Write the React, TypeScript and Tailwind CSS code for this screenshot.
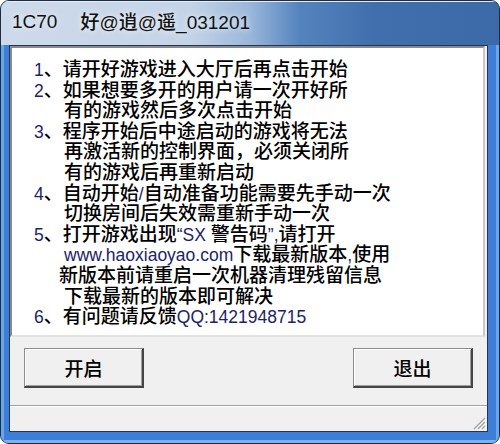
import React from "react";

const cjk = "font-['Noto_Sans_CJK_SC',sans-serif] font-medium";
const latin = "font-['Liberation_Sans','Noto_Sans_CJK_SC',sans-serif] font-normal text-[17.5px] text-[#1c2468]";

type Line = { num?: string; indent: string; body: React.ReactNode };

const lines: Line[] = [
  { num: "1", indent: "pl-[22px]", body: "请开好游戏进入大厅后再点击开始" },
  { num: "2", indent: "pl-[22px]", body: "如果想要多开的用户请一次开好所" },
  { indent: "pl-[52px]", body: "有的游戏然后多次点击开始" },
  { num: "3", indent: "pl-[22px]", body: "程序开始后中途启动的游戏将无法" },
  { indent: "pl-[52px]", body: "再激活新的控制界面，必须关闭所" },
  { indent: "pl-[52px]", body: "有的游戏后再重新启动" },
  {
    num: "4",
    indent: "pl-[22px]",
    body: (
      <>
        自动开始<span className={latin}>/</span>自动准备功能需要先手动一次
      </>
    ),
  },
  { indent: "pl-[52px]", body: "切换房间后失效需重新手动一次" },
  {
    num: "5",
    indent: "pl-[22px]",
    body: (
      <>
        打开游戏出现<span className={latin}>“SX </span>警告码<span className={latin}>”,</span>请打开
      </>
    ),
  },
  {
    indent: "pl-[52px]",
    body: (
      <>
        <span className={latin}>www.haoxiaoyao.com</span>下载最新版本<span className={latin}>,</span>使用
      </>
    ),
  },
  { indent: "pl-[47px]", body: "新版本前请重启一次机器清理残留信息" },
  { indent: "pl-[52px]", body: "下载最新的版本即可解决" },
  {
    num: "6",
    indent: "pl-[22px]",
    body: (
      <>
        有问题请反馈<span className={latin}>QQ:1421948715</span>
      </>
    ),
  },
];

const WinButton = ({ label }: { label: string }) => (
  <button
    className={`w-[120px] h-[40px] bg-[#f0f0f0] border-t border-l border-[#8c8c8c] border-r-2 border-b-2 border-r-[#454545] border-b-[#454545] shadow-[inset_1px_1px_0_#ffffff,inset_-1px_-1px_0_#a0a0a0] text-[19px] text-black leading-none ${cjk}`}
  >
    {label}
  </button>
);

export default function App() {
  return (
    <div className="w-[500px] h-[444px] bg-white">
      <div className="w-[500px] h-[444px] rounded-[9px] border border-[#1c2c44] overflow-hidden flex flex-col bg-[#3a78cf]">
        {/* title bar */}
        <div className="h-[44px] shrink-0 flex items-center pl-[11px] pb-[1px] bg-[linear-gradient(90deg,#cddaea_0%,#c4d4e7_38%,#9ab7da_50%,#5483bd_60%,#416fad_75%,#3c6aa8_100%)] shadow-[inset_0_1px_0_#e6eef8]">
          <span className="text-[19px] text-[#111] font-['Liberation_Sans','Noto_Sans_CJK_SC',sans-serif] [text-shadow:0_0_6px_#ffffff]">
            1C70
          </span>
          <span className="ml-[23px] text-[19px] text-[#111] font-['Liberation_Sans','Noto_Sans_CJK_SC',sans-serif] [text-shadow:0_0_6px_#ffffff]">
            <span className={cjk}>好</span>@<span className={cjk}>逍</span>@<span className={cjk}>遥</span>_031201
          </span>
        </div>

        {/* frame + client */}
        <div className="flex-1 flex pl-[8px] pr-[11px] pb-[11px] bg-[#3d7fd8] shadow-[inset_3px_0_0_#6aa6ea,inset_-3px_0_0_#6aa6ea,inset_0_-3px_0_#78b4f0]">
          <div className="flex-1 flex flex-col bg-[#f0f0f0] border border-[#24354f]">
            {/* text box */}
            <div className="h-[291px] mr-[2px] bg-white border-2 border-t-[#8a8a8a] border-l-[#8a8a8a] border-r-[#c8c8c8] border-b-[#e2e2e2] pt-[10px]">
              {lines.map((l, i) => (
                <div
                  key={i}
                  className={`${l.indent} h-[20.6px] leading-[20.6px] text-[19px] text-black whitespace-nowrap ${cjk}`}
                >
                  {l.num && (
                    <>
                      <span className={latin}>{l.num}</span>、
                    </>
                  )}
                  {l.body}
                </div>
              ))}
            </div>

            {/* buttons */}
            <div className="h-[68px] flex justify-between items-start pt-[11px] pl-[14px] pr-[14px]">
              <WinButton label="开启" />
              <WinButton label="退出" />
            </div>

            {/* status bar */}
            <div className="flex-1 relative border-t border-[#a0a0a0] shadow-[inset_0_1px_0_#ffffff]">
              <svg
                className="absolute right-[1px] bottom-[1px]"
                width="14"
                height="14"
                viewBox="0 0 14 14"
              >
                <g stroke="#a0a0a0" strokeWidth="1.2">
                  <line x1="13" y1="2" x2="2" y2="13" />
                  <line x1="13" y1="6" x2="6" y2="13" />
                  <line x1="13" y1="10" x2="10" y2="13" />
                </g>
                <g stroke="#ffffff" strokeWidth="1">
                  <line x1="14" y1="3" x2="3" y2="14" />
                  <line x1="14" y1="7" x2="7" y2="14" />
                  <line x1="14" y1="11" x2="11" y2="14" />
                </g>
              </svg>
            </div>
          </div>
        </div>
      </div>
    </div>
  );
}
